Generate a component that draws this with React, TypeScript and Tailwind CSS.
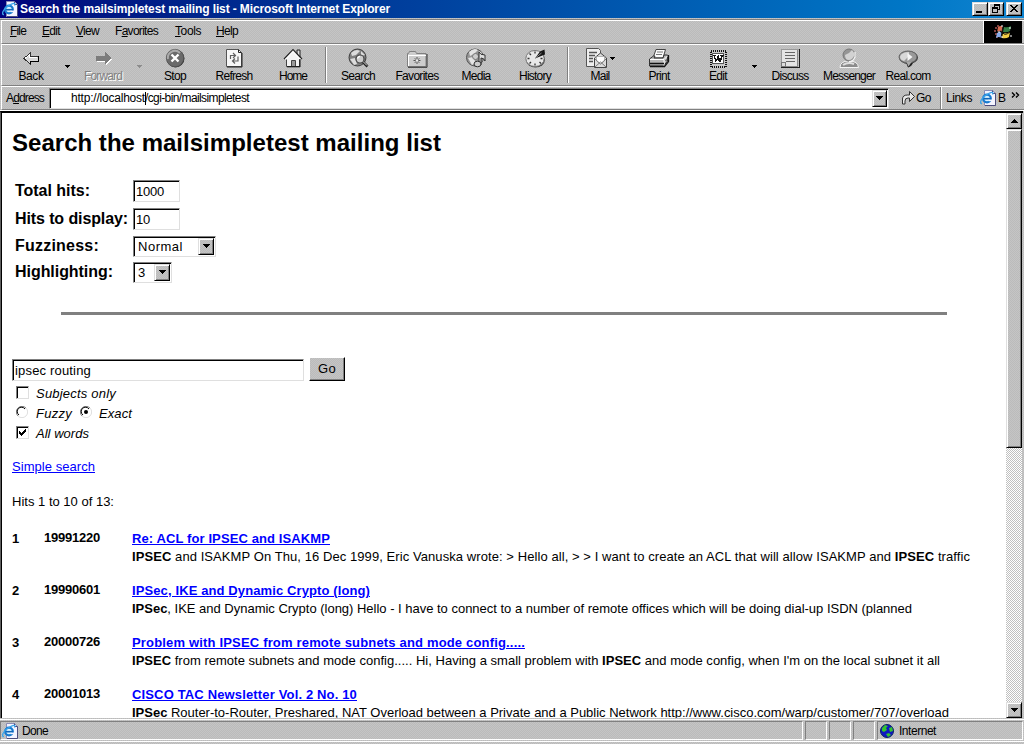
import { useLayoutEffect, useRef, useState, type ReactNode } from "react";

const FACE =
  "bg-[#c0c0c0] bg-[repeating-conic-gradient(#bbbbbb_0_25%,#c5c5c5_0_50%)] bg-[length:2px_2px]";
const RAISED =
  "border border-t-[#dfdfdf] border-l-[#dfdfdf] border-r-black border-b-black shadow-[inset_1px_1px_#fff,inset_-1px_-1px_#808080]";
const SUNKEN =
  "border border-t-[#808080] border-l-[#808080] border-r-[#dfdfdf] border-b-[#dfdfdf] shadow-[inset_1px_1px_#000] bg-white";

/* Spreads a line of text over a given width by adjusting its letter spacing. */
function Fit({ w, children, className = "" }: { w: number; children: ReactNode; className?: string }) {
  const ref = useRef<HTMLSpanElement>(null);
  const [spacing, setSpacing] = useState(0);
  useLayoutEffect(() => {
    const el = ref.current;
    if (!el) return;
    el.style.letterSpacing = "0px";
    const natural = el.getBoundingClientRect().width;
    const count = el.textContent?.length || 1;
    const value = (w - natural) / count;
    el.style.letterSpacing = value + "px";
    setSpacing(value);
  }, [w]);
  return (
    <span ref={ref} className={"inline-block shrink-0 whitespace-nowrap " + className} style={{ letterSpacing: spacing }}>
      {children}
    </span>
  );
}

function Down({ color = "#000", size = 5 }: { color?: string; size?: number }) {
  return size === 7 ? (
    <svg width="7" height="4" viewBox="0 0 7 4" shapeRendering="crispEdges">
      <path d="M0 0h7v1H6v1H5v1H4v1H3V3H2V2H1V1H0z" fill={color} />
    </svg>
  ) : (
    <svg width="5" height="3" viewBox="0 0 5 3" shapeRendering="crispEdges">
      <path d="M0 0h5v1H4v1H3v1H2V2H1V1H0z" fill={color} />
    </svg>
  );
}

function IeIcon() {
  return (
    <svg width="16" height="16" viewBox="0 0 16 16">
      <path d="M4.500 .5h8l3 3v12h-11z" fill="#f4f4ff" stroke="#8a8cb5" />
      <path d="M12.500 .5v3h3v12H5" fill="none" stroke="#4c4c7c" />
      <circle cx="7" cy="8.500" r="3.800" fill="#d8f2ff" stroke="#177ad0" strokeWidth="2.200" />
      <path d="M4 8.700h7" stroke="#1264b7" strokeWidth="1.600" />
      <path d="M8.500 10.400h4" stroke="#f4f4ff" strokeWidth="1.600" />
      <path d="M2 13.500C-1 14 1 8 6 5s8-4 6.500-.5" fill="none" stroke="#3aa5eb" strokeWidth="1.300" />
    </svg>
  );
}

function WinButton({ kind }: { kind: "min" | "restore" | "close" }) {
  return (
    <button className={"flex h-[14px] w-[16px] items-center justify-center " + FACE + " " + RAISED}>
      <svg width="12" height="10" viewBox="0 0 12 10" shapeRendering="crispEdges">
        {kind === "min" && <path d="M2 7h6v2H2z" />}
        {kind === "restore" && (
          <path d="M4 0h6v6H8V5h1V2H5v1H4zM2 3h6v6H2zM3 5v3h4V5z" fillRule="evenodd" />
        )}
        {kind === "close" && (
          <path d="M2 1h2v1h1v1h2V2h1V1h2v1H9v1H8v1H7v1h1v1h1v1h1v1H8V7H7V6H5v1H4v1H2V7h1V6h1V5h1V4H4V3H3V2H2z" />
        )}
      </svg>
    </button>
  );
}

const icons: Record<string, ReactNode> = {
  Back: (
    <g shapeRendering="crispEdges">
      <path d="M3 10.5 9 5v3h8v5H9v3z" fill="#d8d8d8" stroke="#333" />
      <path d="M4 10.5 8 7v2h8" fill="none" stroke="#fff" />
      <path d="M9 16v-3h8V8" fill="none" stroke="#000" />
    </g>
  ),
  Forward: (
    <g shapeRendering="crispEdges">
      <path d="M4 9h9V6l6 5-6 6v-3H4z" fill="#fff" />
      <path d="M3 8h9V4l6 6-6 6v-3H3z" fill="#7c7c7c" />
    </g>
  ),
  Stop: (
    <>
      <circle cx="10.5" cy="10.5" r="9" fill="#303030" />
      <circle cx="10" cy="10" r="8.700" fill="#6a6a6a" stroke="#555" strokeWidth=".7" />
      <path d="M3 11a7 7 0 0 1 12-6" fill="none" stroke="#aaa" strokeWidth="2" />
      <path d="m6.500 6.500 7 7m0-7-7 7" stroke="#fff" strokeWidth="2.400" />
    </>
  ),
  Refresh: (
    <>
      <path d="M2.500 1.500h12l3 3v14h-15z" fill="#f7f7f7" stroke="#555" />
      <path d="M14.500 1.500v3h3M18 5v14H3" fill="none" stroke="#222" />
      <path d="M6.500 11V7.500H11M9 5l2.500 2.500L9 10M14 8.500V13H9m2-2.500L8.500 13l2.500 2.500" fill="none" stroke="#606060" strokeWidth="1.200" />
    </>
  ),
  Home: (
    <>
      <path d="M14 2h3v7h-3z" fill="#ddd" stroke="#222" />
      <path d="M3.500 10 10 3l6.500 7v8.500h-13z" fill="#f4f4f4" stroke="#444" />
      <path d="m1 11 9-9.500 9 9.500" fill="none" stroke="#222" strokeWidth="1.200" />
      <path d="m2.500 11.500 7.500-8 7.500 8" fill="none" stroke="#fff" strokeWidth="1.300" />
      <path d="M8.500 12.500h4v6h-4z" fill="#999" stroke="#444" />
      <path d="M4 18.800h13M17 11v8" stroke="#111" />
    </>
  ),
  Search: (
    <>
      <circle cx="9.500" cy="9.500" r="8.500" fill="#808080" stroke="#3c3c3c" />
      <path d="M3 5q5-5 9-2L8 7 4 8zm-1 6 5-1 2 6-3 1zM13 3l4 4-4 1z" fill="#dcdcdc" />
      <circle cx="12" cy="11" r="4" fill="#ccc" stroke="#444" strokeWidth="1.200" />
      <path d="M9.500 10.500a2.500 2.500 0 0 1 2.500-2" fill="none" stroke="#fff" strokeWidth="1.400" />
      <path d="m15 14 4.500 4.500" stroke="#222" strokeWidth="2.600" />
      <path d="m15 13.500 4 4" stroke="#ddd" />
    </>
  ),
  Favorites: (
    <>
      <path d="M.5 18.500v-13h1l1-2h6l1 2h9.500v13z" fill="#cdcdcd" stroke="#808080" />
      <path d="M1 7.500h18M1.500 8v10" stroke="#fff" />
      <path d="M20 6v13.300H1" fill="none" stroke="#333" />
      <path d="M10 9v7M6.500 12.500h7M7.800 10.300l4.500 4.500m0-4.500-4.500 4.500" stroke="#555" />
      <circle cx="10" cy="12.500" r="1.300" fill="#eee" />
    </>
  ),
  Media: (
    <>
      <circle cx="9" cy="9.500" r="8.500" fill="#959595" stroke="#555" />
      <path d="M3 4q5-5 9-2L8 6 4 8zm-1 6 5-1 3 6-4 2zM13 3l3 2-2 3z" fill="#e4e4e4" />
      <circle cx="9.500" cy="8.500" r="3" fill="#ccc" stroke="#777" />
      <path d="M13 16V4q1 3 6 3v6q-1-3-4-3v7z" fill="#ddd" stroke="#333" />
      <ellipse cx="11.500" cy="16" rx="3.500" ry="2.800" fill="#ccc" stroke="#333" />
    </>
  ),
  History: (
    <>
      <ellipse cx="10.500" cy="11.500" rx="9.500" ry="8" fill="#444" />
      <ellipse cx="10" cy="10.500" rx="9.200" ry="8" fill="#e8e8e8" stroke="#777" />
      <path d="M10 3.500v2m0 10v2M2.500 10.500h2m11 0h2M4.500 5.500 6 7M4.500 15.500 6 14m8.500 0 1.500 1.500" stroke="#333" strokeWidth="1.300" />
      <path d="m10 10.500 5-7 4.500-2 .5 5z" fill="#161616" />
      <path d="m10.500 10 6-5" stroke="#888" />
    </>
  ),
  Mail: (
    <>
      <path d="M.5.5h12l2 2v16H.5z" fill="#eee" stroke="#555" />
      <path d="M3 4.500h8M3 7.500h6M3 10.500h4M3 13.500h4" stroke="#555" strokeWidth="1.300" />
      <path d="m8.500 10 6-5 6 5v9.500h-12z" fill="#dcdcdc" stroke="#444" />
      <path d="M10.500 13V8.500h8V13l-4 3z" fill="#fff" stroke="#999" strokeWidth=".7" />
      <path d="m9 19 5.500-5 5.500 5M9 11l5.500 5 5.500-5" fill="none" stroke="#777" />
    </>
  ),
  Print: (
    <>
      <path d="M7 1.500h9.500L14 10H4z" fill="#fafafa" stroke="#444" />
      <path d="M8 4h6M7 6.500h6" stroke="#777" />
      <path d="m.5 11 4-3h1.500l-1 2h9l1-3h3.500v6l-4 5H.5z" fill="#b8b8b8" stroke="#333" />
      <path d="M1 11.500h14l4-4M15 12v6" fill="none" stroke="#fff" />
      <path d="M1 15.500h14M19.500 7v6.500l-4 5H1" fill="none" stroke="#111" strokeWidth="1.300" />
      <path d="m16.500 13 2-2m-2 5 2-2" stroke="#333" />
    </>
  ),
  Edit: (
    <g shapeRendering="crispEdges">
      <path d="M2.500 2.500h15v16h-15z" fill="#c8c8c8" stroke="#111" strokeWidth="2" strokeDasharray="1 1" />
      <path d="M4.500 5.500h11v10h-11z" fill="#fff" stroke="#555" />
      <path d="M5 7h3v1H7l1 4 2-5h1l1 5 1-4h-1V7h4v1h-1l-2 6h-2l-1-3-2 3H7L6 8H5z" fill="#111" />
    </g>
  ),
  Discuss: (
    <g shapeRendering="crispEdges">
      <path d="M2 1h16v18H2z" fill="#888" />
      <path d="M2 1h15v17H2z" fill="#e4e4e4" />
      <path d="M1.500 18V1.500h17" fill="none" stroke="#999" />
      <path d="M19 1v18.500H1" fill="none" stroke="#222" />
      <path d="M5 4.500h10M5 7.500h10M5 10.500h10M6 13.500h9" stroke="#666" />
      <path d="M1.500 14.500h4v4h-4z" fill="#ddd" stroke="#777" />
    </g>
  ),
  Messenger: (
    <>
      <path d="M1 19.500q0-6.500 9-6.500t9.500 6.500z" fill="#8c8c8c" stroke="#f4f4f4" />
      <path d="M4 17q5-3.500 11-1" fill="none" stroke="#e0e0e0" strokeWidth="2" />
      <circle cx="10" cy="7" r="6" fill="#959595" stroke="#777" />
      <path d="M6 7q4-1 7-5 3 3 2 6-2 4-5 4-4 0-4-5" fill="#d2d2d2" />
      <path d="M16 4v5q-2 5-6 4.500" fill="none" stroke="#f4f4f4" strokeWidth="1.300" />
    </>
  ),
  "Real.com": (
    <>
      <ellipse cx="10.500" cy="9.500" rx="9.500" ry="6.500" fill="#333" />
      <path d="M8 14.500h7q-1 4-5 5z" fill="#222" />
      <ellipse cx="10" cy="9" rx="9" ry="6" fill="#999" stroke="#666" />
      <path d="M2 8.500q2-4.500 9-4.500v4l-5 5q-4-1-4-4.500" fill="#d8d8d8" />
      <path d="m9.500 5 5 4-5 4z" fill="#f5f5f5" />
      <path d="M8.500 14h5l-3 4.500z" fill="#aaa" />
    </>
  ),
};

function Tool({ name, w, wide = false }: { name: string; w: number; wide?: boolean }) {
  const off = name === "Forward";
  return (
    <button className={"relative flex h-[41px] shrink-0 flex-col items-center pt-[3px] " + (wide ? "w-[60px]" : "w-[58px]")}>
      <svg className={name === "Mail" ? "mr-[8px]" : ""} width="21" height="21" viewBox="0 0 21 21">{icons[name]}</svg>
      <Fit w={w} className={"mt-px text-[12px] leading-[13px] " + (off ? "text-[#808080] [text-shadow:1px_1px_#fff]" : "")}>
        {name}
      </Fit>
      {name === "Mail" && (
        <span className="absolute top-[12px] right-[14px] flex"><Down /></span>
      )}
    </button>
  );
}

function ToolArrow({ off = false }: { off?: boolean }) {
  return (
    <span className="flex w-[14px] justify-center pt-[20px]">
      <Down color={off ? "#8c8c8c" : "#000"} />
    </span>
  );
}

function Divider({ wide = false }: { wide?: boolean }) {
  return (
    <span className={"flex h-[38px] justify-center pt-[2px] " + (wide ? "w-[7px]" : "w-[6px]")}>
      <span className="w-[2px] border-r border-l border-r-white border-l-[#808080]" />
    </span>
  );
}

const menus: [string, string, string, number, string][] = [
  ["", "F", "ile", 16, "w-[32px]"],
  ["", "E", "dit", 18, "w-[34px]"],
  ["", "V", "iew", 23, "w-[39px]"],
  ["F", "a", "vorites", 43, "w-[60px]"],
  ["", "T", "ools", 26, "w-[41px]"],
  ["", "H", "elp", 22, "w-[38px]"],
];

function Field({ value, w, className }: { value: string; w: number; className: string }) {
  return (
    <div className={"flex h-[22px] items-center pl-[2px] text-[13px] " + SUNKEN + " " + className}>
      <Fit w={w}>{value}</Fit>
    </div>
  );
}

function Select({ value, w, className }: { value: string; w: number; className: string }) {
  return (
    <div className={"flex h-[21px] items-center justify-between py-px pr-px pl-[4px] text-[13px] " + SUNKEN + " " + className}>
      <Fit w={w} className="pt-px">{value}</Fit>
      <button className={"flex h-[17px] w-[16px] items-center justify-center " + FACE + " " + RAISED}>
        <Down size={7} />
      </button>
    </div>
  );
}

function Check({ on = false }: { on?: boolean }) {
  return (
    <span className={"flex h-[13px] w-[13px] items-center justify-center " + SUNKEN}>
      {on && (
        <svg width="9" height="9" viewBox="0 0 9 9" shapeRendering="crispEdges">
          <path d="M1 3v3l2 2 5-5V0L3 5z" />
        </svg>
      )}
    </span>
  );
}

function Radio({ on = false }: { on?: boolean }) {
  return (
    <svg width="12" height="12" viewBox="0 0 12 12">
      <circle cx="6" cy="6" r="5" fill="#fff" />
      <path d="M2 10A5.500 5.500 0 1 1 10 2" fill="none" stroke="#808080" />
      <path d="M3 9A4.300 4.300 0 1 1 9 3" fill="none" stroke="#000" />
      <path d="M10 2a5.500 5.500 0 0 1-8 8" fill="none" stroke="#dfdfdf" />
      {on && <circle cx="6" cy="6" r="2" />}
    </svg>
  );
}

const results: { date: string; title: string; tw: number; body: ReactNode; bw: number }[] = [
  {
    date: "19991220", title: "Re: ACL for IPSEC and ISAKMP", tw: 198, bw: 838,
    body: <><b>IPSEC</b> and ISAKMP On Thu, 16 Dec 1999, Eric Vanuska wrote: &gt; Hello all, &gt; &gt; I want to create an ACL that will allow ISAKMP and <b>IPSEC</b> traffic</>,
  },
  {
    date: "19990601", title: "IPSec, IKE and Dynamic Crypto (long)", tw: 238, bw: 780,
    body: <><b>IPSec</b>, IKE and Dynamic Crypto (long) Hello - I have to connect to a number of remote offices which will be doing dial-up ISDN (planned</>,
  },
  {
    date: "20000726", title: "Problem with IPSEC from remote subnets and mode config.....", tw: 393, bw: 808,
    body: <><b>IPSEC</b> from remote subnets and mode config..... Hi, Having a small problem with <b>IPSEC</b> and mode config, when I'm on the local subnet it all</>,
  },
  {
    date: "20001013", title: "CISCO TAC Newsletter Vol. 2 No. 10", tw: 225, bw: 817,
    body: <><b>IPSec</b> Router-to-Router, Preshared, NAT Overload between a Private and a Public Network http://www.cisco.com/warp/customer/707/overload</>,
  },
];

const PANE = "h-[19px] border border-t-[#808080] border-l-[#808080] border-r-white border-b-white";

export default function App() {
  return (
    <div className={"flex h-[744px] w-[1024px] flex-col overflow-hidden font-['Liberation_Sans',Arial,sans-serif] text-[12px] leading-none text-black " + FACE}>
      <header className="flex h-[18px] shrink-0 items-center bg-linear-to-r from-[#00007b] to-[#1084d0] pr-[2px] pl-[2px] text-white">
        <IeIcon />
        <Fit w={370} className="ml-[2px] text-[12px] font-bold">Search the mailsimpletest mailing list - Microsoft Internet Explorer</Fit>
        <div className="ml-auto flex text-black">
          <WinButton kind="min" />
          <WinButton kind="restore" />
          <span className="w-[2px]" />
          <WinButton kind="close" />
        </div>
      </header>

      <div className="mt-px h-px shrink-0 bg-[#808080]" />
      <nav className="ml-px flex h-[24px] shrink-0 border-t border-b border-l border-t-white border-b-[#808080] border-l-white pl-[8px]">
        {menus.map(([pre, key, post, w, cls]) => (
          <span key={pre + key} className={"pt-[4px] " + cls}>
            <Fit w={w} className="leading-[12px]">{pre}<u className="underline-offset-1">{key}</u>{post}</Fit>
          </span>
        ))}
        <span className="mr-[2px] ml-auto flex w-[39px] items-center justify-center border-l border-white bg-black">
          <svg width="19" height="16" viewBox="0 0 19 16">
            <path d="M1 4h2M0 7h2M1 10h2M3 2h2M2 13h2" stroke="#a55" strokeWidth="1.500" />
            <path d="m4 3q3-2 5 0L8 8Q6 6 3 8z" fill="#d66b50" />
            <path d="m10 3q4 1 7-1l-1 5q-3 2-7 1z" fill="#357d45" />
            <path d="m3 9q3-2 5 0l-1 5q-2-2-5 0z" fill="#85abea" />
            <path d="m9 9q4 1 7-1l-1 5q-3 2-7 1z" fill="#f1cc43" />
            <path d="m9 2-2 12M3 8q4-2 6 1t7-1" fill="none" stroke="#111" />
            <path d="M7 2h2m7 1v2M4 8h2m10 4h2M7 13h2" stroke="#fff" />
          </svg>
        </span>
      </nav>

      <div className="ml-px flex h-[42px] shrink-0 border-t border-b border-l border-t-white border-b-[#808080] border-l-white">
        <Tool name="Back" w={25} />
        <ToolArrow />
        <Tool name="Forward" w={38} />
        <ToolArrow off />
        <Tool name="Stop" w={22} />
        <Tool name="Refresh" w={37} wide />
        <Tool name="Home" w={28} />
        <Divider wide />
        <Tool name="Search" w={34} />
        <Tool name="Favorites" w={43} wide />
        <Tool name="Media" w={29} />
        <Tool name="History" w={32} wide />
        <Divider />
        <Tool name="Mail" w={19} />
        <Tool name="Print" w={21} wide />
        <Tool name="Edit" w={18} />
        <ToolArrow />
        <Tool name="Discuss" w={37} />
        <Tool name="Messenger" w={52} wide />
        <Tool name="Real.com" w={45} />
      </div>

      <div className="ml-px flex h-[24px] shrink-0 items-center border-t border-b border-l border-t-white border-b-[#808080] border-l-white">
        <span className="w-[47px] pl-[4px]"><Fit w={38}>A<u>d</u>dress</Fit></span>
        <div className={"flex h-[21px] w-[840px] items-center py-px pr-px pl-[21px] " + SUNKEN}>
          <Fit w={74}>http://localhost</Fit>
          <span className="-mr-px h-[13px] w-px bg-black" />
          <Fit w={104}>/cgi-bin/mailsimpletest</Fit>
          <button className={"ml-auto flex h-[17px] w-[15px] items-center justify-center " + FACE + " " + RAISED}>
            <Down size={7} />
          </button>
        </div>
        <svg className="ml-[11px]" width="16" height="16" viewBox="0 0 16 16">
          <path d="M2.500 14V9q0-4 5-4h2V1.500l5 5-5 5V8H8q-3 0-3 3v3z" fill="#e8e8e8" stroke="#333" />
        </svg>
        <Fit w={15}>Go</Fit>
        <span className="ml-[9px] h-[22px] w-[2px] border-r border-l border-r-white border-l-[#808080]" />
        <span className="ml-[4px]"><Fit w={26}>Links</Fit></span>
        <span className="ml-[8px]"><IeIcon /></span>
        <Fit w={7} className="ml-[2px]">B</Fit>
        <svg className="mt-[-6px] ml-[6px]" width="9" height="6" viewBox="0 0 9 6">
          <path d="m1 .5 2.500 2.500L1 5.500M5 .5 7.500 3 5 5.500" fill="none" stroke="#000" strokeWidth="1.400" />
        </svg>
      </div>

      <div className="h-px shrink-0 bg-white" />
      <div className="mr-px flex h-[607px] shrink-0 border-t-2 border-l border-t-black border-l-[#606060]">
        <main className="h-[605px] w-[1005px] overflow-hidden border-l border-black bg-white pl-[10px] text-[13px]">
          <h1 className="flex h-[60px] items-center text-[24px] font-bold"><Fit w={429}>Search the mailsimpletest mailing list</Fit></h1>
          <div className="mt-[4px] pl-[3px] text-[16px] font-bold">
            <div className="flex h-[28px] items-center">
              <span className="w-[118px]"><Fit w={75}>Total hits:</Fit></span>
              <Field value="1000" w={28} className="w-[47px] font-normal" />
            </div>
            <div className="flex h-[28px] items-center">
              <span className="w-[118px]"><Fit w={113}>Hits to display:</Fit></span>
              <Field value="10" w={14} className="w-[47px] font-normal" />
            </div>
            <div className="flex h-[26px] items-center">
              <span className="w-[118px]"><Fit w={84}>Fuzziness:</Fit></span>
              <Select value="Normal" w={45} className="w-[83px] font-normal" />
            </div>
            <div className="flex h-[26px] items-center">
              <span className="w-[118px]"><Fit w={98}>Highlighting:</Fit></span>
              <Select value="3" w={8} className="w-[39px] font-normal" />
            </div>
          </div>
          <hr className="mt-[27px] ml-[49px] h-[3px] w-[886px] border-0 bg-[#808080]" />
          <div className="mt-[41px] flex h-[26px] items-start">
            <Field value="ipsec routing" w={76} className="mt-[3px] w-[292px]" />
            <button className={"mt-px ml-[5px] flex h-[24px] w-[36px] items-center justify-center border border-t-white border-l-white border-r-black border-b-black pb-[2px] shadow-[inset_-1px_-1px_#808080] " + FACE}><Fit w={18}>Go</Fit></button>
          </div>
          <div className="flex h-[20px] items-center pl-[4px] italic"><Check /><Fit w={80} className="ml-[7px] pt-[2px]">Subjects only</Fit></div>
          <div className="flex h-[20px] items-center pl-[4px] italic">
            <Radio /><Fit w={36} className="ml-[8px] pt-[2px]">Fuzzy</Fit>
            <span className="ml-[8px] flex"><Radio on /></span><Fit w={33} className="ml-[7px] pt-[2px]">Exact</Fit>
          </div>
          <div className="flex h-[20px] items-center pl-[4px] italic"><Check on /><Fit w={53} className="ml-[7px] pt-[2px]">All words</Fit></div>
          <div className="mt-[14px] flex h-[20px] items-center"><a className="text-[#0000ff]"><Fit w={83} className="underline underline-offset-1">Simple search</Fit></a></div>
          <div className="mt-[15px] flex h-[20px] items-center"><Fit w={102}>Hits 1 to 10 of 13:</Fit></div>
          <div className="mt-[18px]">
            {results.map((r, i) => (
              <article key={r.date} className="flex h-[52px] last:h-[36px]">
                <b className="w-[32px] pt-[3px]">{i + 1}</b>
                <b className="w-[88px] pt-[2px]"><Fit w={56}>{r.date}</Fit></b>
                <div className="flex flex-col leading-[17px]">
                  <a className="h-[18px] pt-px font-bold text-[#0000ff]"><Fit w={r.tw} className="underline underline-offset-1">{r.title}</Fit></a>
                  <p className="h-[17px] pt-[2px] leading-[15px]"><Fit w={r.bw}>{r.body}</Fit></p>
                </div>
              </article>
            ))}
          </div>
        </main>
        <aside className="flex w-[16px] flex-col bg-[repeating-conic-gradient(#c0c0c0_0_25%,#fff_0_50%)] bg-[length:2px_2px]">
          <button className={"flex h-[16px] items-center justify-center " + FACE + " " + RAISED}><span className="flex rotate-180"><Down size={7} /></span></button>
          <div className={"h-[319px] " + FACE + " " + RAISED} />
          <button className={"mt-auto flex h-[16px] items-center justify-center " + FACE + " " + RAISED}><Down size={7} /></button>
        </aside>
      </div>

      <div className="mt-px h-px shrink-0 bg-white" />
      <footer className="mt-px flex shrink-0 gap-[2px]">
        <div className={"flex w-[803px] items-center pl-px " + PANE}><IeIcon /><Fit w={26} className="ml-[4px] pt-px">Done</Fit></div>
        <div className={"w-[22px] " + PANE} />
        <div className={"w-[22px] " + PANE} />
        <div className={"w-[22px] " + PANE} />
        <div className={"flex w-[146px] items-center pl-[2px] " + PANE}>
          <svg width="14" height="14" viewBox="0 0 14 14">
            <circle cx="7" cy="7" r="6.500" fill="#1018c0" stroke="#0b2360" />
            <path d="M2 4 5 1l3 1-2 2 1 2-3 2-2-1zm7 0 3-1 1 4-3 1zM6 10l3-1 2 2-3 2z" fill="#35c42e" />
          </svg>
          <Fit w={37} className="ml-[5px] pt-px">Internet</Fit>
        </div>
      </footer>
      <div className="mt-px h-px shrink-0 bg-white" />
    </div>
  );
}
